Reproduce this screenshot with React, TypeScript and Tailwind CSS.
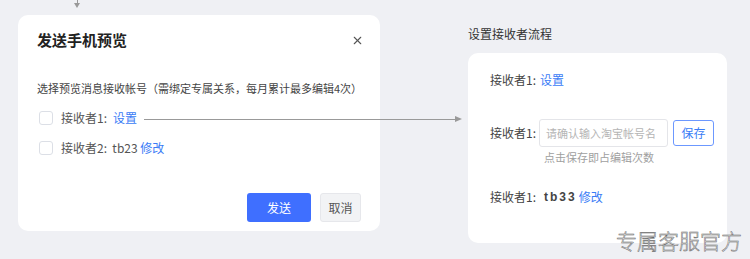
import { X } from 'lucide-react'

const FONT = { fontFamily: '"Noto Sans CJK SC", "Noto Sans", sans-serif' }

function Checkbox() {
  return <span className="w-[14px] h-[14px] rounded-[3px] border border-[#dcdfe6] bg-white shrink-0" />
}

export default function App() {
  return (
    <div style={FONT} className="relative w-[750px] h-[259px] bg-[#eff0f4] overflow-hidden text-[12px] text-[#555]">
      {/* incoming arrow on top */}
      <div className="absolute left-[74px] top-0 flex flex-col items-center">
        <span className="w-px h-[3px] bg-[#999]" />
        <span className="w-0 h-0 border-l-[3.5px] border-r-[3.5px] border-t-[5px] border-l-transparent border-r-transparent border-t-[#999]" />
      </div>

      {/* connector from modal to flow card */}
      <div className="absolute left-[144px] top-[116px] flex items-center">
        <span className="w-[311px] h-px bg-[#999]" />
        <span className="w-0 h-0 border-t-[3.5px] border-b-[3.5px] border-l-[7px] border-t-transparent border-b-transparent border-l-[#999]" />
      </div>

      <div className="flex">
        {/* Modal */}
        <div className="ml-[18px] mt-[15px] w-[362px] h-[216px] bg-white rounded-[10px] flex flex-col px-[19px] pt-[14px] pb-[9px]">
          <div className="flex items-center justify-between h-[22px]">
            <h2 className="text-[15px] font-bold text-[#222]">发送手机预览</h2>
            <X className="w-[13px] h-[13px] text-[#555] mr-[-3px]" strokeWidth={2} />
          </div>
          <p className="mt-[28px] leading-[18px] text-[#444] text-[11px] whitespace-nowrap">选择预览消息接收帐号（需绑定专属关系，每月累计最多编辑4次）</p>
          <div className="mt-[12px] ml-[2px] flex items-center gap-[8px] h-[18px]">
            <Checkbox />
            <span>接收者1:</span>
            <span className="text-[#3a7cf6] -ml-[2px]">设置</span>
          </div>
          <div className="mt-[12px] ml-[2px] flex items-center gap-[8px] h-[18px]">
            <Checkbox />
            <span>
              接收者2:&nbsp;&nbsp;tb23 <span className="text-[#3a7cf6]">修改</span>
            </span>
          </div>
          <div className="mt-auto flex justify-end gap-[9px]">
            <button className="w-[64px] h-[29px] rounded-[3px] bg-[#3f6fff] text-white text-[12px]">发送</button>
            <button className="w-[41px] h-[29px] rounded-[3px] bg-[#f2f3f5] border border-[#e6e7eb] text-[#555] text-[12px]">取消</button>
          </div>
        </div>

        {/* Flow */}
        <div className="ml-[88px] mt-[26px] flex flex-col">
          <p className="leading-[16px] text-[#333]">设置接收者流程</p>
          <div className="mt-[11px] w-[259px] h-[190px] bg-white rounded-[10px] pl-[22px] pt-[19px] flex flex-col">
            <div className="flex items-center h-[16px] gap-[4px]">
              <span className="text-[#444]">接收者1:</span>
              <span className="text-[#3a7cf6]">设置</span>
            </div>
            <div className="mt-[31px] flex items-start">
              <span className="w-[49px] text-[#444] leading-[16px] mt-[6px]">接收者1:</span>
              <div className="flex flex-col">
                <div className="flex items-center gap-[5px]">
                  <div className="w-[129px] h-[28px] rounded-[3px] border border-[#e4e5e9] flex items-center pl-[6px] text-[11px] text-[#b5b5b5] whitespace-nowrap">
                    请确认输入淘宝帐号名
                  </div>
                  <button className="w-[41px] h-[26px] rounded-[3px] border border-[#6c98ff] text-[#3a7cf6] text-[12px]">保存</button>
                </div>
                <p className="mt-[2px] ml-[5px] leading-[16px] text-[11px] text-[#a0a0a0]">点击保存即占编辑次数</p>
              </div>
            </div>
            <div className="mt-[24px] flex items-center h-[16px]">
              <span className="w-[54px] text-[#444]">接收者1:</span>
              <span className="font-bold tracking-[2px] text-[#444]" style={{ fontFamily: '"Liberation Sans", sans-serif' }}>tb33</span>
              <span className="ml-[2px] text-[#3a7cf6]">修改</span>
            </div>
          </div>
        </div>
      </div>

      {/* watermark */}
      <span className="absolute left-[616px] top-[227px] text-[21px] leading-[26px] font-light text-white [-webkit-text-stroke:0.5px_#666]">专属客服官方</span>
    </div>
  )
}
